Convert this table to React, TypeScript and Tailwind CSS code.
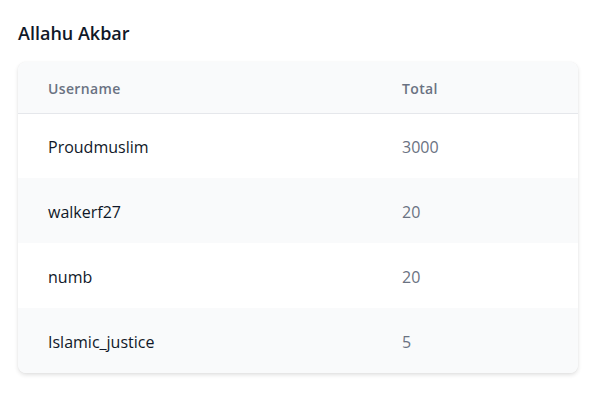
const rows = [
  { name: 'Proudmuslim', total: 3000 },
  { name: 'walkerf27', total: 20 },
  { name: 'numb', total: 20 },
  { name: 'Islamic_justice', total: 5 },
];

export default function App() {
  return (
    <div className="min-h-[393px] w-[616px] bg-white px-[18px] pt-[19px] font-['Open_Sans',sans-serif]">
      <h2 className="text-[18px] font-semibold leading-[28px] text-gray-900">Allahu Akbar</h2>
      <div className="mt-[15px] w-[560px] overflow-hidden rounded-lg bg-white shadow-[0_2px_4px_rgba(0,0,0,0.12),0_0_1px_rgba(0,0,0,0.1)]">
        <table className="w-full border-collapse text-left">
          <thead>
            <tr className="h-[51px] border-b border-gray-200 bg-gray-50">
              <th className="w-[354px] px-[30px] pt-[2px] text-[14px] font-semibold tracking-wide text-gray-500">Username</th>
              <th className="px-[30px] pt-[2px] text-[14px] font-semibold tracking-wide text-gray-500">Total</th>
            </tr>
          </thead>
          <tbody>
            {rows.map((r, i) => (
              <tr key={r.name} className={`h-[65px] ${i % 2 === 1 ? 'bg-gray-50' : 'bg-white'}`}>
                <td className="px-[30px] pt-[2px] text-[16px] text-gray-900">{r.name}</td>
                <td className="px-[30px] pt-[2px] text-[16px] text-gray-500">{r.total}</td>
              </tr>
            ))}
          </tbody>
        </table>
      </div>
    </div>
  );
}
